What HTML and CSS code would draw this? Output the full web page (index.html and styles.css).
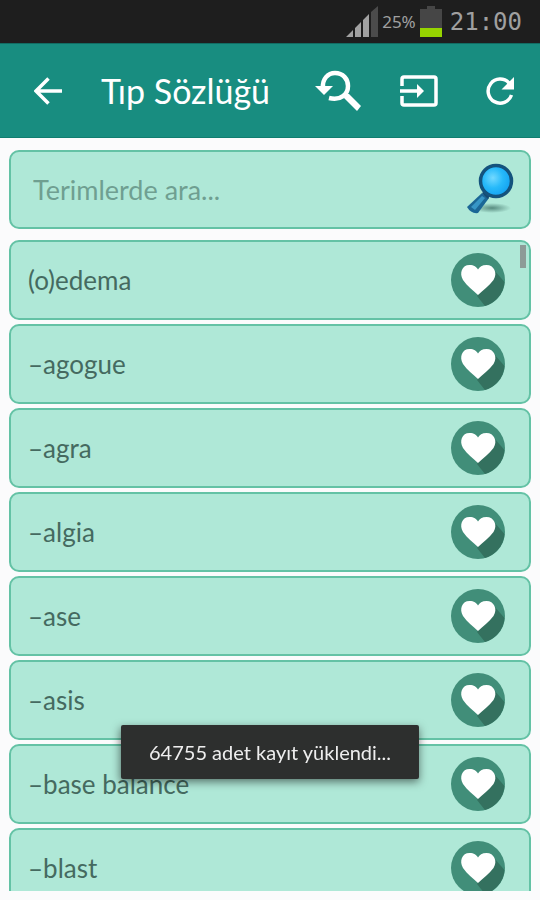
FILE: index.html
```html
<!DOCTYPE html>
<html lang="tr">
<head>
<meta charset="utf-8">
<meta name="viewport" content="width=device-width, initial-scale=1">
<title>Tıp Sözlüğü</title>
<link rel="stylesheet" href="styles.css">
</head>
<body>
<svg class="defs" aria-hidden="true">
  <symbol id="heart" viewBox="0 0 54 54">
    <circle cx="27" cy="27" r="27" fill="#418e79"/>
    <path d="M43 17L53.500 29A27 27 0 0 1 34 53L26 43Z" fill="#34715f"/>
    <path d="M27 42C22 37 16 33 12 27C8 20 11 12 18.500 12C23 12 25.500 14 27 16.500C28.500 14 31 12 35.500 12C43 12 47 20 42.500 27C38 33 32 37 27 42Z" fill="#fff"/>
  </symbol>
</svg>
<div class="status">
  <svg class="signal" viewBox="0 0 32 32" aria-hidden="true">
    <path d="M0 31L7 24V31ZM9 22L15 16V31H9ZM17 14L23 8V31H17Z" fill="#a2a2a2"/>
    <path d="M25 6L32 0V31H25Z" fill="#4b4b4b"/>
  </svg>
  <span class="percent">25%</span>
  <svg class="battery" viewBox="0 0 22 32" aria-hidden="true">
    <path d="M0 3H7V0H15V3H22V22H0Z" fill="#464646"/>
    <path d="M0 22H22V31H0Z" fill="#96d400"/>
  </svg>
  <time class="clock">21:00</time>
</div>
<header class="bar">
  <button class="icon" aria-label="Geri"><svg width="28" height="28" viewBox="0 0 28 28"><path d="M28 14H3M14.500 1.500L2 14L14.500 26.500" fill="none" stroke="#fff" stroke-width="3.500"/></svg></button>
  <h1>Tıp Sözlüğü</h1>
  <div class="actions">
    <button class="icon" aria-label="Aramayı sıfırla"><svg width="46" height="42" viewBox="0 0 46 42"><path d="M8 18C7 9 13 3 20 3C28 3 33 9 33 16C33 24 26 31 14 28" fill="none" stroke="#fff" stroke-width="4.500"/><path d="M30 24L34 24L46 36L42 41L29 28Z" fill="#fff"/><path d="M0 16H18L9 25Z" fill="#fff"/></svg></button>
    <button class="icon" aria-label="Giriş"><svg width="38" height="32" viewBox="0 0 38 32"><path d="M2 11V4Q2 2 4 2H34Q36 2 36 4V28Q36 30 34 30H4Q2 30 2 28V21M0 16H19" fill="none" stroke="#fff" stroke-width="3.500"/><path d="M17 9L24 16L17 23Z" fill="#fff"/></svg></button>
    <button class="icon" aria-label="Yenile"><svg width="28" height="28" viewBox="0 0 28 28"><path d="M23 6A12 12 0 1 0 25.500 18" fill="none" stroke="#fff" stroke-width="3.500"/><path d="M28 0V12.500H15.500Z" fill="#fff"/></svg></button>
  </div>
</header>
<main>
  <form class="card search">
    <input type="search" placeholder="Terimlerde ara..." aria-label="Terimlerde ara">
    <button class="icon" type="button" aria-label="Ara"><svg width="54" height="54" viewBox="0 0 54 54">
      <defs>
        <radialGradient id="lens" cx=".4" cy=".4" r=".65"><stop offset="0" stop-color="#73d9ff"/><stop offset=".5" stop-color="#27bafa"/><stop offset="1" stop-color="#119ff0"/></radialGradient>
        <radialGradient id="shade"><stop offset="0" stop-color="#3b6c62" stop-opacity=".75"/><stop offset="1" stop-color="#3b6c62" stop-opacity="0"/></radialGradient>
      </defs>
      <ellipse cx="27" cy="45" rx="19" ry="5" fill="url(#shade)"/>
      <path d="M17 30L24 35L13 50Q6 51 2 44Z" fill="#1b6796"/>
      <path d="M17 33L20 35L10 47L6 44Z" fill="#3796c6"/>
      <path d="M17 30L21 27L26 31L23 36Z" fill="#164a72"/>
      <circle cx="31" cy="18" r="15.500" fill="url(#lens)" stroke="#14537d" stroke-width="3.500"/>
    </svg></button>
  </form>
  <ul class="list">
    <li class="card row"><span>(o)edema</span><button class="icon" aria-label="Favori: (o)edema"><svg class="heart"><use href="#heart"/></svg></button></li>
    <li class="card row"><span>–agogue</span><button class="icon" aria-label="Favori: agogue"><svg class="heart"><use href="#heart"/></svg></button></li>
    <li class="card row"><span>–agra</span><button class="icon" aria-label="Favori: agra"><svg class="heart"><use href="#heart"/></svg></button></li>
    <li class="card row"><span>–algia</span><button class="icon" aria-label="Favori: algia"><svg class="heart"><use href="#heart"/></svg></button></li>
    <li class="card row"><span>–ase</span><button class="icon" aria-label="Favori: ase"><svg class="heart"><use href="#heart"/></svg></button></li>
    <li class="card row"><span>–asis</span><button class="icon" aria-label="Favori: asis"><svg class="heart"><use href="#heart"/></svg></button></li>
    <li class="card row"><span>–base balance</span><button class="icon" aria-label="Favori: base balance"><svg class="heart"><use href="#heart"/></svg></button></li>
    <li class="card row"><span>–blast</span><button class="icon" aria-label="Favori: blast"><svg class="heart"><use href="#heart"/></svg></button></li>
  </ul>
  <div class="thumb"></div>
</main>
<div class="toast" role="status">64755 adet kayıt yüklendi...</div>
</body>
</html>
```
FILE: styles.css
```css
* { box-sizing: border-box; }
body {
  margin: 0;
  height: 100vh;
  overflow: hidden;
  display: flex;
  flex-direction: column;
  background: #fbfbfc;
  font-family: Lato, "Open Sans", sans-serif;
  color: #456a60;
}
.defs { position: absolute; width: 0; height: 0; }
svg { display: block; flex: none; }
.status {
  flex: none;
  display: flex;
  align-items: center;
  justify-content: flex-end;
  height: 43px;
  padding-right: 18px;
  background: #1e1e1e;
  color: #a0a0a0;
}
.signal { width: 32px; height: 32px; }
.percent { margin: 0 4px; font: 17px/24px "Noto Sans", sans-serif; }
.battery { width: 22px; height: 32px; }
.clock { margin-left: 8px; font: 24px/32px "DejaVu Sans Mono", monospace; }
.bar {
  flex: none;
  display: flex;
  align-items: center;
  height: 95px;
  padding: 0 17px 0 34px;
  gap: 39px;
  background: #188d80;
  border-top: 1px solid #126c63;
  border-bottom: 1px solid #107d70;
  color: #fff;
}
h1 { flex: 1; margin: 0; font-size: 34px; line-height: 40px; font-weight: 400; white-space: nowrap; }
.icon { flex: none; padding: 0; border: 0; background: none; }
.actions { display: flex; align-items: center; gap: 35px; }
.actions .icon { display: flex; justify-content: center; width: 46px; }
main {
  position: relative;
  flex: 1;
  min-height: 0;
  display: flex;
  flex-direction: column;
  gap: 11px;
  margin-bottom: 9px;
  padding: 12px 9px 0;
  overflow: hidden;
}
.card {
  flex: none;
  display: flex;
  align-items: center;
  justify-content: space-between;
  height: 80px;
  background: #afe8d7;
  border: 2px solid #64c2a5;
  border-radius: 10px;
}
.search { margin: 0; height: 79px; padding: 0 10px 0 22px; }
.search input {
  flex: 1;
  min-width: 0;
  padding: 0;
  border: 0;
  outline: 0;
  background: none;
  font: inherit;
  font-size: 27px;
}
.search input::placeholder { color: #6f9f91; opacity: 1; }
.list { display: flex; flex-direction: column; gap: 4px; margin: 0; padding: 0; list-style: none; }
.row { padding: 0 24px 0 17px; font-size: 26px; line-height: 32px; }
.heart { width: 54px; height: 54px; }
.thumb { position: absolute; top: 107px; right: 14px; width: 6px; height: 23px; background: #8d9b97; }
.toast {
  position: fixed;
  left: 50%;
  bottom: 121px;
  transform: translateX(-50%);
  padding: 15px 28px;
  border-radius: 2px;
  background: #2d2f2e;
  color: #eee;
  font-size: 20px;
  line-height: 24px;
  white-space: nowrap;
  box-shadow: 0 3px 8px rgba(0, 0, 0, .5);
}
```
